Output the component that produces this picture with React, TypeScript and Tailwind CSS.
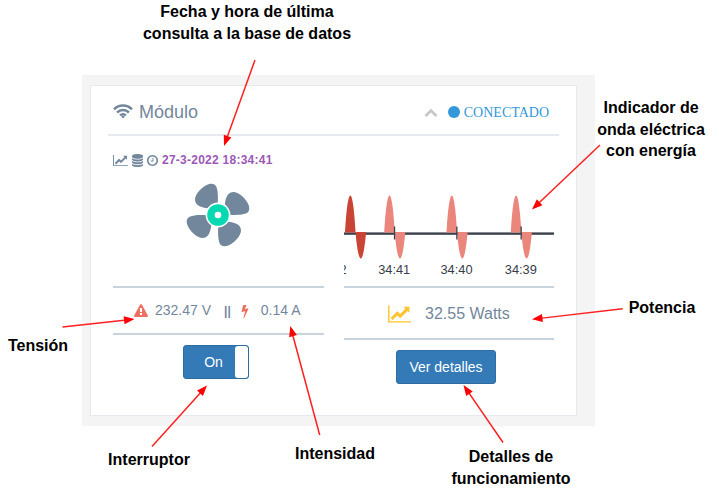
import type { ReactNode } from "react";

const ICONS = {
  line: "M2048 1536v128h-2048v-1536h128v1408h1920zm-128-1248v435q0 21-19.5 29.5t-35.5-7.5l-121-121-633 633q-10 10-23 10t-23-10l-233-233-416 416-192-192 585-585q10-10 23-10t23 10l233 233 464-464-121-121q-16-16-7.5-35.5t29.5-19.5h435q14 0 23 9t9 23z",
  database:
    "M896 768q237 0 443-43t325-127v170q0 69-103 128t-280 93.5-385 34.5-385-34.5-280-93.5-103-128v-170q119 84 325 127t443 43zm0 768q237 0 443-43t325-127v170q0 69-103 128t-280 93.5-385 34.5-385-34.5-280-93.5-103-128v-170q119 84 325 127t443 43zm0-384q237 0 443-43t325-127v170q0 69-103 128t-280 93.5-385 34.5-385-34.5-280-93.5-103-128v-170q119 84 325 127t443 43zm0-1152q208 0 385 34.5t280 93.5 103 128v128q0 69-103 128t-280 93.5-385 34.5-385-34.5-280-93.5-103-128v-128q0-69 103-128t280-93.5 385-34.5z",
  clock:
    "M1024 544v448q0 14-9 23t-23 9h-320q-14 0-23-9t-9-23v-64q0-14 9-23t23-9h224v-352q0-14 9-23t23-9h64q14 0 23 9t9 23zm416 352q0-148-73-273t-198-198-273-73-273 73-198 198-73 273 73 273 198 198 273 73 273-73 198-198 73-273zm224 0q0 209-103 385.5t-279.5 279.5-385.5 103-385.5-103-279.5-279.5-103-385.5 103-385.5 279.5-279.5 385.5-103 385.5 103 279.5 279.5 103 385.5z",
  warning:
    "M1024 1375v-190q0-14-9.5-23.5t-22.5-9.5h-192q-13 0-22.5 9.5t-9.5 23.5v190q0 14 9.5 23.5t22.5 9.5h192q13 0 22.5-9.5t9.5-23.5zm-2-374l18-459q0-12-10-19-13-11-24-11h-220q-11 0-24 11-10 7-10 21l17 457q0 10 10 16.5t24 6.5h185q14 0 23.500-6.500t10.500-16.500zm-14-934l768 1408q35 63-2 126-17 29-46.500 46t-63.500 17h-1536q-34 0-63.500-17t-46.500-46q-37-63-2-126l768-1408q17-31 47-49t65-18 65 18 47 49z",
  bolt: "M1333 566q18 20 7 44l-540 1157q-13 25-42 25-4 0-14-2-17-5-25.5-19t-4.5-30l197-808-406 101q-4 1-12 1-18 0-31-11-18-15-13-39l201-825q4-14 16-23t28-9h328q19 0 32 12.5t13 29.5q0 8-5 18l-171 463 396-98q8-2 12-2 19 0 34 15z",
  up: "M1683 1331l-166 165q-19 19-45 19t-45-19l-531-531-531 531q-19 19-45 19t-45-19l-166-165q-19-19-19-45.500t19-45.500l742-741q19-19 45-19t45 19l742 741q19 19 19 45.500t-19 45.500z",
};

function Icon({ name, box = "0 0 1792 1792", className }: { name: keyof typeof ICONS; box?: string; className: string }) {
  return (
    <svg viewBox={box} className={`shrink-0 fill-current ${className}`}>
      <path d={ICONS[name]} />
    </svg>
  );
}

function Wifi() {
  return (
    <svg viewBox="0 0 20 15" className="h-[15px] w-5 shrink-0" fill="none" stroke="currentColor" strokeWidth="2.5">
      <path d="M1 5.300A12.700 12.700 0 0 1 19 5.300M4.100 8.500A8.300 8.300 0 0 1 15.900 8.500M7.100 11.400A4.100 4.100 0 0 1 12.900 11.400" />
      <path d="M8.100 12.500Q10 11.100 11.900 12.500L10 14.500Z" fill="currentColor" stroke="none" />
    </svg>
  );
}

function Fan() {
  const blade = "M-.3-11C.2-17 0-23-1.200-27C-2.200-31-5.500-32-9.500-30.800C-16-28.500-22.500-21.500-23-16C-23.200-10.500-19-8-11-6.800L-5-9Z";
  return (
    <svg viewBox="-33 -33 66 66" className="h-[66px] w-[66px]">
      {[0, 90, 180, 270].map((angle) => (
        <path key={angle} d={blade} fill="#73879c" transform={`rotate(${angle})`} />
      ))}
      <circle r="12.400" fill="#fff" />
      <circle r="10.800" fill="#04d9b2" />
      <circle r="3.300" fill="#fff" />
    </svg>
  );
}

const PULSES = [
  { x: 11.5, color: "#c94435", label: "34:42" },
  { x: 50.7, color: "#eb867c", label: "34:41" },
  { x: 113, color: "#eb867c", label: "34:40" },
  { x: 177.300, color: "#eb867c", label: "34:39" },
];

function Wave() {
  return (
    <svg viewBox="0 0 210 92" className="block h-[92px] w-[210px]">
      <rect y="43.400" width="210" height="2.400" fill="#3c424d" />
      {PULSES.map(({ x, color }) => (
        <g key={x}>
          <path
            d={`M${x - 10.500} 43.500C${x - 9.500} 24 ${x - 7.500} 6.500 ${x - 5.200} 6.500S${x - 1} 24 ${x} 43.500Z`}
            fill={color}
          />
          <path d={`M${x} 43H${x + 10.600}C${x + 9.500} 55 ${x + 7.800} 69.500 ${x + 5.300} 69.500S${x + 1} 55 ${x} 43Z`} fill={color} />
        </g>
      ))}
      {PULSES.slice(1).map(({ x }) => (
        <rect key={x} x={x - 0.8} y="37.500" width="1.300" height="13" fill="#3c424d" />
      ))}
      {PULSES.map(({ x, label }, i) => (
        <text
          key={label}
          x={i ? x - 0.5 : -13.500}
          y="85"
          textAnchor="middle"
          fontSize="12.800"
          fill="#373d49"
          fontFamily="Liberation Sans, sans-serif"
        >
          {label}
        </text>
      ))}
    </svg>
  );
}

const ARROWS = [
  [255, 60, 224, 146],
  [600, 145, 532, 209.5],
  [622.7, 308.7, 532, 319.3],
  [62.5, 327, 134.5, 319],
  [152, 446.500, 207, 385.5],
  [319.7, 435, 290.3, 326],
  [503, 442.500, 463.5, 385],
];

function Arrows() {
  return (
    <svg viewBox="0 0 719 492" className="pointer-events-none absolute inset-0 h-full w-full">
      {ARROWS.map(([x1, y1, x2, y2]) => {
        const length = Math.hypot(x2 - x1, y2 - y1);
        const angle = (Math.atan2(y2 - y1, x2 - x1) * 180) / Math.PI;
        return (
          <g key={x1} transform={`translate(${x1} ${y1}) rotate(${angle})`}>
            <path d={`M0 0H${length - 8}`} stroke="#ff2020" strokeWidth="1.500" />
            <path d={`M${length} 0l-10.500-4v8z`} fill="#ff0000" />
          </g>
        );
      })}
    </svg>
  );
}

function Label({ className, children }: { className: string; children: ReactNode }) {
  return (
    <div
      className={`whitespace-nowrap text-center font-['Liberation_Sans',sans-serif] text-[16px] font-bold leading-[21.500px] text-black ${className}`}
    >
      {children}
    </div>
  );
}

export default function App() {
  return (
    <div className="relative flex h-[492px] w-[719px] flex-col overflow-hidden bg-white font-['Liberation_Sans',sans-serif] text-[#73879c]">
      <header className="h-[75px] pl-[137px] pt-px">
        <Label className="w-[220px]">
          Fecha y hora de última
          <br />
          consulta a la base de datos
        </Label>
      </header>
      <div className="flex h-[351px]">
        <aside className="w-[82px] shrink-0 pt-[260px]">
          <Label className="w-[76px]">Tensión</Label>
        </aside>
        <main className="w-[513px] shrink-0 bg-[#f4f4f4] pb-[10px] pl-2 pr-[18px] pt-[10px]">
          <section className="h-[331px] border border-[#e6e9ed] bg-white px-[17px]">
            <div className="flex h-[50px] items-center border-b-2 border-[#e6e9ed] pl-[5px] pr-[10px] pt-[3px]">
              <Wifi />
              <h2 className="ml-[6px] text-[18px] leading-5">Módulo</h2>
              <Icon name="up" className="ml-auto h-[14px] w-[14px] text-[#c5c7cb]" />
              <span className="ml-[10px] h-3 w-3 rounded-full bg-[#3498db]" />
              <span className="ml-[4px] pt-[3px] font-['Liberation_Serif',serif] text-[14px] leading-5 text-[#3498db]">CONECTADO</span>
            </div>
            <div className="flex gap-5 pl-[5px]">
              <div className="w-[211px]">
                <div className="flex h-[46px] items-center pt-[2px] text-[12px] font-bold">
                  <Icon name="line" box="0 0 2048 1792" className="h-[13px] w-[15px]" />
                  <Icon name="database" className="ml-[3px] h-[13px] w-[13px]" />
                  <Icon name="clock" className="ml-[2px] h-[13px] w-[13px]" />
                  <span className="ml-[3px] tracking-[0.250px] text-[#9b59b6]">27-3-2022 18:34:41</span>
                </div>
                <div className="flex h-[104px] pl-[72px]">
                  <Fan />
                </div>
                <div className="flex h-[49px] items-center border-y-2 border-[#c9d3dd] pl-[21px] text-[14px]">
                  <Icon name="warning" className="h-[14px] w-[14px] text-[#ec7063]" />
                  <span className="ml-[7px]">232.47 V</span>
                  <span className="ml-[13px] text-[12px] font-bold">||</span>
                  <Icon name="bolt" className="ml-[7px] h-[14px] w-[14px] text-[#ec7063]" />
                  <span className="ml-[9px]">0.14 A</span>
                </div>
                <button className="ml-[70px] mt-[10px] flex h-[34px] w-[66px] rounded-[3px] border border-[#2e6da4] bg-[#337ab7] text-[14px] text-white">
                  <span className="w-[51px] self-center pl-[8px] text-center">On</span>
                  <span className="h-full w-[13px] rounded-[3px] bg-white" />
                </button>
              </div>
              <div className="w-[210px]">
                <div className="h-[150px] pt-[53px]">
                  <Wave />
                </div>
                <div className="flex h-[54px] items-center border-y-2 border-[#c9d3dd] pl-[44px] pt-[2px] text-[16px]">
                  <Icon name="line" box="0 0 2048 1792" className="h-5 w-[23px] text-[#ffc32e]" />
                  <span className="ml-[14px]">32.55 Watts</span>
                </div>
                <button className="ml-[52px] mt-[10px] h-[34px] w-[100px] rounded-[3px] border border-[#2e6da4] bg-[#337ab7] text-[14px] text-white">
                  Ver detalles
                </button>
              </div>
            </div>
          </section>
        </main>
        <aside className="flex shrink-0 flex-col pt-[22px]">
          <Label className="w-[112px]">
            Indicador de
            <br />
            onda eléctrica
            <br />
            con energía
          </Label>
          <Label className="mt-[135px] w-[134px]">Potencia</Label>
        </aside>
      </div>
      <footer className="flex items-start">
        <Label className="ml-[99px] mt-[23px] w-[100px]">Interruptor</Label>
        <Label className="ml-[85px] mt-[17px] w-[102px]">Intensidad</Label>
        <Label className="ml-[65px] mt-[20px] w-[120px]">
          Detalles de
          <br />
          funcionamiento
        </Label>
      </footer>
      <Arrows />
    </div>
  );
}
